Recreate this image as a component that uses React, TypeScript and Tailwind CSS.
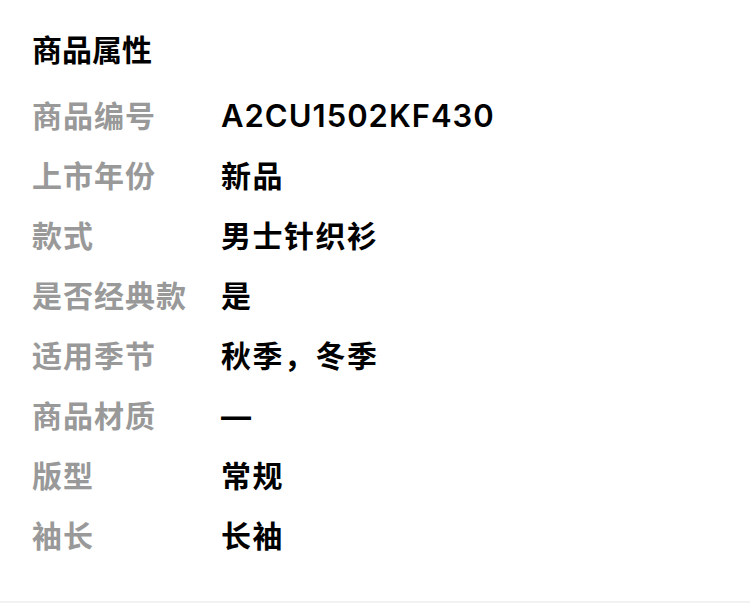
import React from 'react';

const attrs: { label: string; value: string; latin?: boolean }[] = [
  { label: '商品编号', value: 'A2CU1502KF430', latin: true },
  { label: '上市年份', value: '新品' },
  { label: '款式', value: '男士针织衫' },
  { label: '是否经典款', value: '是' },
  { label: '适用季节', value: '秋季，冬季' },
  { label: '商品材质', value: '—' },
  { label: '版型', value: '常规' },
  { label: '袖长', value: '长袖' },
];

export default function App() {
  return (
    <div
      className="w-[750px] h-[603px] bg-white flex flex-col"
      style={{ fontFamily: 'Inter, "Noto Sans CJK SC", sans-serif' }}
    >
      <div className="flex-1 pl-[32px] pt-[30px]">
        <h2 className="h-[40px] leading-[40px] text-[30px] font-bold text-black">商品属性</h2>
        <div className="mt-[16px] flex flex-col">
          {attrs.map((a) => (
            <div key={a.label} className="flex items-center h-[60px]">
              <span className="w-[189px] shrink-0 text-[30px] font-bold tracking-[1px] text-[#999999]">{a.label}</span>
              <span
                className={
                  a.latin
                    ? 'text-[31px] font-semibold tracking-[1px] text-black'
                    : 'text-[30px] font-bold tracking-[1.5px] text-black'
                }
              >
                {a.value}
              </span>
            </div>
          ))}
        </div>
      </div>
      <div className="h-[2px] bg-[#f2f2f2]" />
    </div>
  );
}
